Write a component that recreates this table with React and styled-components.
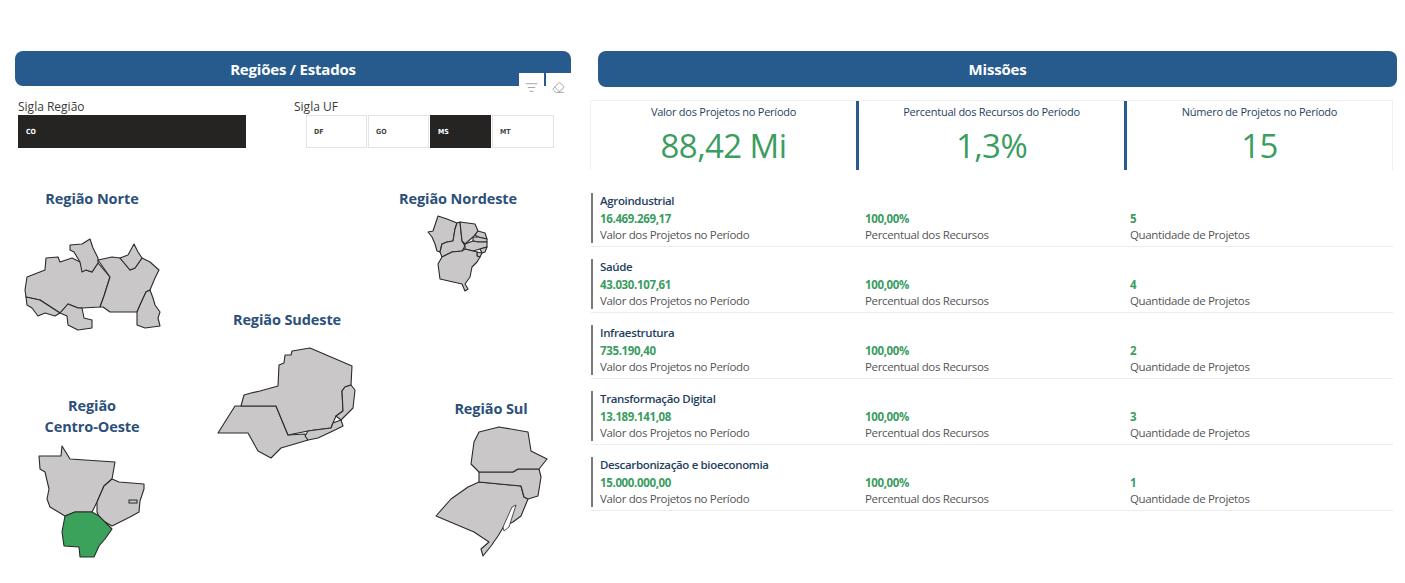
import React from "react";
import styled, { createGlobalStyle } from "styled-components";
import { ListFilter, Eraser } from "lucide-react";

const GlobalStyle = createGlobalStyle`
  html, body { margin: 0; padding: 0; background: #ffffff; }
  body { font-family: "Open Sans", "Noto Sans", sans-serif; }
  * { box-sizing: border-box; }
`;

const BLUE = "#275b8e";
const GREEN = "#3b9d5f";
const NAVY = "#1f3f62";

const Page = styled.div`
  display: flex;
  width: 1405px;
  height: 583px;
  padding: 51px 0 0 15px;
  gap: 19px;
`;

const LeftPanel = styled.section`
  width: 556px;
  display: flex;
  flex-direction: column;
`;

const RightPanel = styled.section`
  width: 807px;
  display: flex;
  flex-direction: column;
`;

const HeaderBar = styled.div`
  position: relative;
  height: ${(p) => p.$h}px;
  margin-left: ${(p) => p.$indent || 0}px;
  background: ${BLUE};
  border-radius: 8px;
  color: #fff;
  font-weight: 700;
  font-size: 15px;
  display: flex;
  align-items: center;
  justify-content: center;
  letter-spacing: -0.2px;
`;

const IconTray = styled.div`
  position: absolute;
  right: 0;
  top: 22px;
  display: flex;
  gap: 2px;
`;

const IconBox = styled.div`
  width: 25px;
  height: 24px;
  background: #fff;
  display: flex;
  align-items: center;
  justify-content: center;
  color: #8a8a8a;
  padding-top: 4px;
`;

const SlicerRow = styled.div`
  display: flex;
  margin-top: 13px;
  padding-left: 3px;
  gap: 48px;
`;

const Slicer = styled.div`
  display: flex;
  flex-direction: column;
`;

const SlicerLabel = styled.div`
  font-size: 12px;
  color: #3a3a3a;
  line-height: 15px;
  height: 15px;
  margin-bottom: 1px;
`;

const SlicerItems = styled.div`
  display: flex;
  gap: 1px;
  margin-left: ${(p) => p.$indent || 0}px;
`;

const SlicerItem = styled.div`
  width: ${(p) => p.$w}px;
  height: 33px;
  background: ${(p) => (p.$on ? "#252423" : "#fff")};
  border: 1px solid ${(p) => (p.$on ? "#252423" : "#e3e3e3")};
  color: ${(p) => (p.$on ? "#fff" : "#444")};
  font-family: "DejaVu Sans Condensed", "DejaVu Sans", sans-serif;
  font-size: 7px;
  font-weight: 700;
  display: flex;
  align-items: center;
  padding-left: 7px;
`;

const MapArea = styled.div`
  display: flex;
  margin-top: 40px;
  padding-left: 2px;
`;

const MapColumn = styled.div`
  width: ${(p) => p.$w}px;
  display: flex;
  flex-direction: column;
  padding-top: ${(p) => p.$top || 0}px;
  gap: ${(p) => p.$gap || 0}px;
`;

const MapTile = styled.div`
  display: flex;
  flex-direction: column;
  align-items: center;
  width: ${(p) => p.$w}px;
  margin-left: ${(p) => p.$indent || 0}px;
`;

const RegionTitle = styled.div`
  color: #2c507a;
  font-size: 14.5px;
  font-weight: 700;
  line-height: 21px;
  text-align: center;
  letter-spacing: -0.1px;
  white-space: nowrap;
  margin-bottom: ${(p) => p.$gap || 0}px;
`;

const MapSvg = styled.svg`
  display: block;
  overflow: visible;
`;

const KpiRow = styled.div`
  display: flex;
  margin-top: 13px;
  height: 70px;
  width: 803px;
  border: 1px solid #f0f0f0;
  border-bottom: none;
`;

const KpiCard = styled.div`
  flex: 1;
  display: flex;
  flex-direction: column;
  align-items: center;
  padding-top: 3px;
  border-left: ${(p) => (p.$sep ? `3px solid ${BLUE}` : "none")};
`;

const KpiTitle = styled.div`
  font-size: 11px;
  color: ${NAVY};
  letter-spacing: -0.25px;
  line-height: 15px;
`;

const KpiValue = styled.div`
  font-size: 33px;
  color: ${GREEN};
  font-weight: 400;
  line-height: 40px;
  margin-top: 7px;
  letter-spacing: -0.6px;
`;

const MissionList = styled.div`
  display: flex;
  flex-direction: column;
  margin-top: 22px;
  width: 803px;
`;

const MissionRow = styled.div`
  display: flex;
  flex-direction: column;
  height: 66px;
  padding-top: 1px;
`;

const MissionBody = styled.div`
  border-left: 2px solid #7a7a7a;
  margin-left: 1px;
  padding-left: 7px;
  height: 50px;
  display: flex;
  flex-direction: column;
`;

const MissionName = styled.div`
  font-size: 11.5px;
  font-weight: 600;
  color: ${NAVY};
  line-height: 16px;
  height: 18px;
  letter-spacing: -0.35px;
`;

const MissionGrid = styled.div`
  display: grid;
  grid-template-columns: 265px 265px 1fr;
`;

const Metric = styled.div`
  display: flex;
  flex-direction: column;
`;

const MetricValue = styled.div`
  font-size: 11.5px;
  font-weight: 700;
  color: ${GREEN};
  line-height: 16px;
  letter-spacing: -0.35px;
`;

const MetricLabel = styled.div`
  font-size: 11.5px;
  color: #555;
  line-height: 16px;
  letter-spacing: -0.35px;
`;

const Divider = styled.div`
  height: 1px;
  background: #ececec;
  margin-top: 3px;
  margin-left: 1px;
`;

const F = "#c9c7c7";
const S = "#2a2a2a";

const Shape = ({ pts, fill = F }) => (
  <polygon points={pts} fill={fill} stroke={S} strokeWidth="1.1" strokeLinejoin="round" />
);

const NorteMap = () => (
  <MapSvg width="140" height="96" viewBox="22 236 140 96">
    <Shape pts="27,277 45,270 46,258 58,257 60,262 72,258 80,262 86,270 92,272 98,263 110,277 104,296 100,307 82,308 78,308 68,304 60,313 40,300 26,297 25,290" />
    <Shape pts="70,245 82,244 90,239 93,248 98,258 98,263 92,272 86,270 82,272 80,262 74,252 70,250" />
    <Shape pts="26,297 40,300 60,313 55,316 45,313 38,316 32,308 27,305" />
    <Shape pts="60,313 68,304 78,308 82,308 84,318 92,320 92,328 78,330 68,325 67,316" />
    <Shape pts="98,260 112,257 120,258 130,270 135,268 142,258 150,262 159,270 155,278 150,290 146,292 140,305 137,312 110,312 103,307 100,307 104,296 110,277" />
    <Shape pts="120,258 128,255 134,244 138,252 142,258 135,268 130,270" />
    <Shape pts="146,292 150,290 153,298 155,305 160,312 158,318 160,326 145,328 137,325 137,312 140,305" />
  </MapSvg>
);

const NordesteMap = () => (
  <MapSvg width="64" height="80" viewBox="426 214 64 80">
    <Shape pts="428,233 433,232 438,217 447,220 457,224 455,230 453,242 447,243 442,245 440,253 437,252 435,245 432,238" />
    <Shape pts="457,224 460,223 462,242 465,247 462,252 452,253 442,258 440,253 442,245 447,243 453,242 455,230" />
    <Shape pts="460,223 475,225 478,232 473,238 465,245 462,242" />
    <Shape pts="478,232 485,234 487,240 478,238 475,236" />
    <Shape pts="473,238 478,238 487,240 487,243 478,243 473,242" />
    <Shape pts="465,245 473,242 478,243 487,243 487,248 480,250 473,252 465,250" />
    <Shape pts="480,250 487,248 485,253 482,254" />
    <Shape pts="477,253 482,254 480,258 477,257" />
    <Shape pts="442,258 452,253 462,252 465,250 473,252 477,253 477,257 480,258 477,263 472,268 470,278 465,285 468,290 465,292 462,285 440,280 438,265" />
  </MapSvg>
);

const SudesteMap = () => (
  <MapSvg width="140" height="114" viewBox="219 348 140 114">
    <Shape pts="220,435 237,408 243,408 278,408 290,437 307,436 310,442 300,445 283,450 273,460 260,453 250,435" />
    <Shape pts="243,408 246,397 253,395 262,393 280,388 281,367 286,365 287,357 293,357 294,353 312,350 354,368 353,387 347,389 344,393 345,413 338,418 335,425 333,430 317,432 310,433 290,437 278,408" />
    <Shape pts="347,389 353,387 357,392 355,410 343,422 338,418 345,413 344,393" />
    <Shape pts="335,425 343,422 345,428 337,432 320,440 310,442 307,438 310,433 317,432 333,430" />
  </MapSvg>
);

const CentroOesteMap = () => (
  <MapSvg width="110" height="116" viewBox="35 445 110 116">
    <Shape pts="37,457 59,457 60,447 68,460 113,463 110,480 102,487 95,503 90,513 73,513 63,517 48,508 45,500 47,490 43,473 38,470" />
    <Shape pts="110,480 117,483 142,485 142,490 138,502 137,513 128,518 110,527 98,520 95,513 95,503 102,487" />
    <Shape pts="63,517 73,513 90,513 97,517 110,530 103,540 97,547 92,558 78,558 77,548 62,547 60,533" fill="#3aa25b" />
    <rect x="127" y="501" width="8" height="3" fill={F} stroke={S} strokeWidth="1" />
  </MapSvg>
);

const SulMap = () => (
  <MapSvg width="114" height="134" viewBox="433 426 114 134">
    <Shape pts="478,483 520,487 523,498 527,500 520,517 512,523 503,527 497,537 490,547 482,557 480,550 488,543 473,533 435,517 450,500 467,488" />
    <Shape pts="478,473 512,473 517,470 538,470 540,478 537,497 527,500 523,498 520,487 478,483" />
    <Shape pts="478,433 498,428 527,433 530,452 546,460 538,470 517,470 512,473 478,473 470,465 473,443" />
    <polygon points="511,508 515,506 508,528 503,532 502,528" fill="#fff" stroke={S} strokeWidth="0.8" />
  </MapSvg>
);

const missions = [
  { name: "Agroindustrial", value: "16.469.269,17", qty: "5" },
  { name: "Saúde", value: "43.030.107,61", qty: "4" },
  { name: "Infraestrutura", value: "735.190,40", qty: "2" },
  { name: "Transformação Digital", value: "13.189.141,08", qty: "3" },
  { name: "Descarbonização e bioeconomia", value: "15.000.000,00", qty: "1" },
];

export default function App() {
  return (
    <>
      <GlobalStyle />
      <Page>
        <LeftPanel>
          <HeaderBar $h={35}>
            Regiões / Estados
            <IconTray>
              <IconBox>
                <ListFilter size={13} strokeWidth={1.4} />
              </IconBox>
              <IconBox>
                <Eraser size={13} strokeWidth={1.4} />
              </IconBox>
            </IconTray>
          </HeaderBar>
          <SlicerRow>
            <Slicer>
              <SlicerLabel>Sigla Região</SlicerLabel>
              <SlicerItems>
                <SlicerItem $w={228} $on>CO</SlicerItem>
              </SlicerItems>
            </Slicer>
            <Slicer>
              <SlicerLabel>Sigla UF</SlicerLabel>
              <SlicerItems $indent={12}>
                <SlicerItem $w={61}>DF</SlicerItem>
                <SlicerItem $w={61}>GO</SlicerItem>
                <SlicerItem $w={61} $on>MS</SlicerItem>
                <SlicerItem $w={62}>MT</SlicerItem>
              </SlicerItems>
            </Slicer>
          </SlicerRow>
          <MapArea>
            <MapColumn $w={190} $gap={63}>
              <MapTile $w={150}>
                <RegionTitle $gap={27}>Região Norte</RegionTitle>
                <NorteMap />
              </MapTile>
              <MapTile $w={150}>
                <RegionTitle $gap={7}>
                  Região
                  <br />
                  Centro-Oeste
                </RegionTitle>
                <CentroOesteMap />
              </MapTile>
            </MapColumn>
            <MapColumn $w={180} $top={121}>
              <MapTile $w={160}>
                <RegionTitle $gap={16}>Região Sudeste</RegionTitle>
                <SudesteMap />
              </MapTile>
            </MapColumn>
            <MapColumn $w={170} $gap={105}>
              <MapTile $w={140} $indent={1}>
                <RegionTitle $gap={4}>Região Nordeste</RegionTitle>
                <NordesteMap />
              </MapTile>
              <MapTile $w={140} $indent={34}>
                <RegionTitle $gap={6}>Região Sul</RegionTitle>
                <SulMap />
              </MapTile>
            </MapColumn>
          </MapArea>
        </LeftPanel>
        <RightPanel>
          <HeaderBar $h={36} $indent={8}>Missões</HeaderBar>
          <KpiRow>
            <KpiCard>
              <KpiTitle>Valor dos Projetos no Período</KpiTitle>
              <KpiValue>88,42 Mi</KpiValue>
            </KpiCard>
            <KpiCard $sep>
              <KpiTitle>Percentual dos Recursos do Período</KpiTitle>
              <KpiValue>1,3%</KpiValue>
            </KpiCard>
            <KpiCard $sep>
              <KpiTitle>Número de Projetos no Período</KpiTitle>
              <KpiValue>15</KpiValue>
            </KpiCard>
          </KpiRow>
          <MissionList>
            {missions.map((m) => (
              <MissionRow key={m.name}>
                <MissionBody>
                  <MissionName>{m.name}</MissionName>
                  <MissionGrid>
                    <Metric>
                      <MetricValue>{m.value}</MetricValue>
                      <MetricLabel>Valor dos Projetos no Período</MetricLabel>
                    </Metric>
                    <Metric>
                      <MetricValue>100,00%</MetricValue>
                      <MetricLabel>Percentual dos Recursos</MetricLabel>
                    </Metric>
                    <Metric>
                      <MetricValue>{m.qty}</MetricValue>
                      <MetricLabel>Quantidade de Projetos</MetricLabel>
                    </Metric>
                  </MissionGrid>
                </MissionBody>
                <Divider />
              </MissionRow>
            ))}
          </MissionList>
        </RightPanel>
      </Page>
    </>
  );
}
